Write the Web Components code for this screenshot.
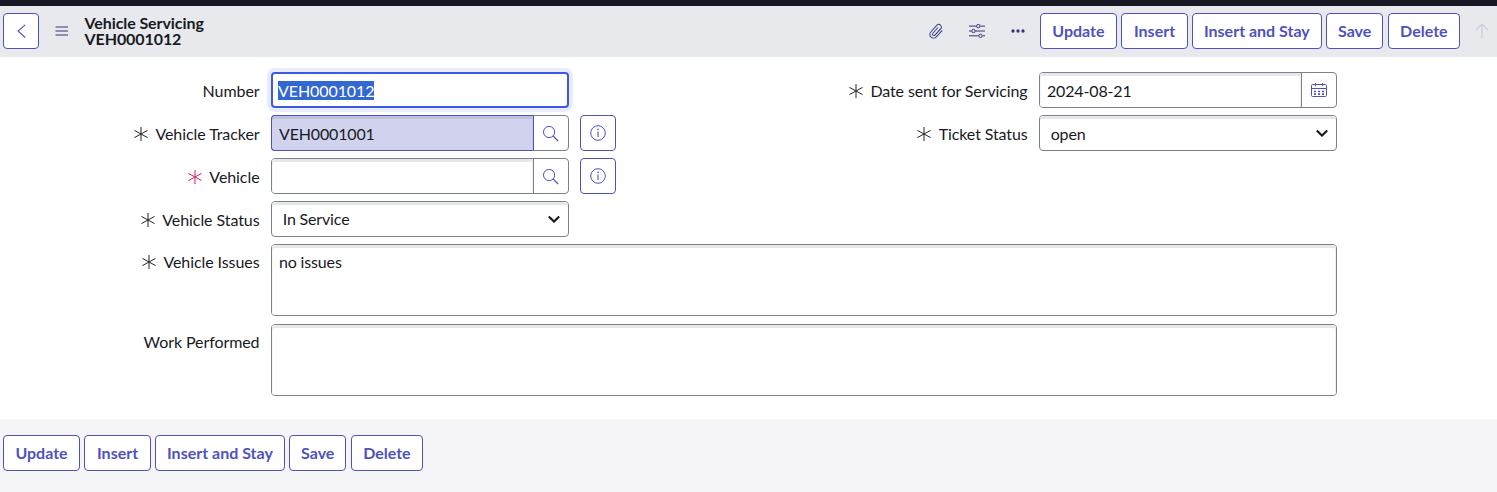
<!DOCTYPE html>
<html lang="en">
<head>
<meta charset="utf-8">
<title>Vehicle Servicing</title>
<style>
  html, body { margin: 0; height: 100%; }
  body { font-family: Lato, sans-serif; font-size: 16px; line-height: 19px; letter-spacing: -.08px; color: #181a1f; background: #fff; overflow: hidden; }
</style>
</head>
<body>
<record-page></record-page>
<script>
const ICONS = {
  back: [12, 16, '<path d="M10.2 1.8 3 8l7.2 6.5" stroke-width="1.1"/>'],
  menu: [14, 10, '<path d="M.5 1h12.5M.5 5h12.5M.5 9h12.5" stroke-width="1.1"/>'],
  clip: [16, 18, '<path transform="translate(8.4 8.8) rotate(42)" d="M4-4.2V4.6a3.7 3.7 0 0 1-7.4 0V-5.2a2.8 2.8 0 0 1 5.2 0V4.2a1.4 1.4 0 0 1-2.8 0V-3.6" stroke-width=".95"/>'],
  sliders: [16, 14, '<path d="M0 2.1h7.3M11.3 2.1H16M0 7h2.6M6.4 7H16M0 11.8h9.4M13.6 11.8H16"/><circle cx="9.3" cy="2.1" r="1.7"/><circle cx="4.5" cy="7" r="1.7"/><circle cx="11.5" cy="11.8" r="1.7"/>'],
  dots: [14, 4, '<g fill="currentColor" stroke="none"><circle cx="2" cy="2" r="1.65"/><circle cx="7" cy="2" r="1.65"/><circle cx="12" cy="2" r="1.65"/></g>'],
  up: [14, 16, '<path d="M7 15.5V1M.8 7.2 7 1l6.2 6.2" stroke-width="1.1"/>'],
  search: [17, 17, '<circle cx="6.1" cy="7" r="5.6"/><path d="m10.1 11 5 5" stroke-width="1.2"/>'],
  info: [16, 16, '<circle cx="8" cy="8" r="7.3"/><path d="M8 6.6v5.4" stroke-width="1.1"/><circle cx="8" cy="4.4" r=".8" fill="currentColor" stroke="none"/>'],
  calendar: [16, 14, '<rect x=".5" y="1.5" width="15" height="12" rx="1.2"/><path d="M.5 5.5h15M4.5 0v3M11.5 0v3"/><path d="M3 8.5h2m2 0h2m2 0h2M3 11.2h2m2 0h2m2 0h2" stroke-width="1.7"/>'],
  chevron: [12, 8, '<path d="M.8 1.6 6 6.6l5.2-5" stroke-width="2.1"/>'],
  star: [14, 14, '<path d="M7 0v14M.4 3.4l13.2 7.2M13.6 3.4.4 10.6" stroke-width="1"/>']
};
const define = (name, html, setup) => {
  const t = document.createElement('template');
  t.innerHTML = html;
  customElements.define(name, class extends HTMLElement {
    constructor() {
      super();
      this.attachShadow({ mode: 'open' }).append(t.content.cloneNode(true));
    }
    connectedCallback() { if (setup) setup(this, this.shadowRoot); }
  });
};

define('ui-icon', `<style>:host{display:block;flex:none}svg{display:block;fill:none;stroke:currentColor;stroke-width:1}</style><svg></svg>`, (el, root) => {
  const [w, h, body] = ICONS[el.getAttribute('name')];
  const svg = root.querySelector('svg');
  svg.setAttribute('width', w);
  svg.setAttribute('height', h);
  svg.setAttribute('viewBox', `0 0 ${w} ${h}`);
  svg.innerHTML = body;
});

define('ui-button', `<style>
  :host{display:block;flex:none}
  button{box-sizing:border-box;height:36px;width:var(--w,auto);padding:0 0 var(--lift,0);border:1px solid #4f52bd;border-radius:4px;background:#fff;color:#4f52bd;font:700 16px/19px Lato,sans-serif;display:flex;align-items:center;justify-content:center;white-space:nowrap}
</style><button><slot></slot></button>`);

define('action-buttons', `<style>
  :host{display:flex;gap:4.4px;--lift:2px}
</style>
<ui-button style="--w:77px">Update</ui-button><ui-button style="--w:66.4px">Insert</ui-button><ui-button style="--w:129.5px">Insert and Stay</ui-button><ui-button style="--w:57.3px">Save</ui-button><ui-button style="--w:72.3px">Delete</ui-button>`);

define('record-header', `<style>
  :host{box-sizing:border-box;display:flex;height:57px;padding:7px 8px 0 3px;border-top:6px solid #181825;background:#e7e9ed;align-items:flex-start;color:#33357f}
  .row{display:flex;align-items:center;height:36px}
  .title{margin:2px 0 0 15.5px;font-weight:700;line-height:16px;color:#181a1f}
  .tools{margin-left:auto}
  action-buttons{margin-left:15px}
</style>
<div class="row"><ui-button style="--w:36px"><ui-icon name="back"></ui-icon></ui-button><ui-icon name="menu" style="margin-left:16px"></ui-icon></div>
<div class="title"><div>Vehicle Servicing</div><div>VEH0001012</div></div>
<div class="row tools"><ui-icon name="clip"></ui-icon><ui-icon name="sliders" style="margin-left:25px"></ui-icon><ui-icon name="dots" style="margin-left:26px"></ui-icon><action-buttons></action-buttons><ui-icon name="up" style="margin-left:15px;color:#c9cbe0"></ui-icon></div>`);

define('form-row', `<style>
  :host{display:flex}
  .label{display:flex;justify-content:flex-end;gap:7.5px;width:var(--label,259.5px);height:19px;margin:9px 11.5px 0 0;white-space:nowrap;flex:none}
  :host([tall]) .label{margin-top:8px}
  ui-icon{margin-top:3px;color:#22252b}
  :host([required=empty]) ui-icon{color:#dc1f55}
  .control{display:flex}
</style><div class="label"><ui-icon name="star"></ui-icon><span></span></div><div class="control"><slot></slot></div>`, (el, root) => {
  root.querySelector('span').textContent = el.getAttribute('label');
  if (!el.hasAttribute('required')) root.querySelector('ui-icon').remove();
});

define('field-box', `<style>
  :host{box-sizing:border-box;display:flex;width:298px;height:36px;border:1px solid #7c8190;border-radius:4px;background:#fff;letter-spacing:-.16px}
  .value{flex:1;padding:var(--top,8px) 7px 0;box-shadow:inset 0 3px 0 #e7e8e9,inset -1px 0 0 #f0f0f1,inset 1px 0 0 #f7f7f8;border-radius:3px}
  .addon{display:none;box-sizing:border-box;width:35px;align-items:center;justify-content:center;border-left:1px solid #7c8190;color:#4f52bd}
  :host([addon]) .addon{display:flex}
  :host([addon]) .value{border-radius:3px 0 0 3px}
  :host([kind=area]){width:1066px;height:72px}
  :host([kind=area]) .value{padding-top:7px}
  :host([kind=select]) .value{padding-left:10.7px;border-radius:3px 0 0 3px;box-shadow:inset 0 3px 0 #e7e8e9}
  :host([kind=select]) .addon{display:flex;width:28px;border:0;color:#181a1f;box-shadow:inset 0 3px 0 #e7e8e9;border-radius:0 3px 3px 0}
  :host([filled]) .value{margin:-1px 0 -1px -1px;border:1px solid #4f52bd;border-right:0;border-radius:4px 0 0 4px;background:#d1d2ee;box-shadow:inset 0 3px 0 #bfc0dc,inset -1px 0 0 #c8c9e5}
  :host([filled]) .addon{border-left-color:#4f52bd}
  :host([focused]){border:2px solid #3d58e3;box-shadow:0 0 0 4px #e9ecfc;letter-spacing:-.08px}
  :host([focused]) .value{box-shadow:none;padding:7px 5px 0}
  :host([focused]) ::slotted(span){display:inline-block;background:#3367d1;color:#fff}
</style><div class="value"><slot></slot></div><div class="addon"></div>`, (el, root) => {
  const name = el.getAttribute('addon') || (el.getAttribute('kind') === 'select' && 'chevron');
  if (name) {
    const icon = document.createElement('ui-icon');
    icon.setAttribute('name', name);
    root.querySelector('.addon').append(icon);
  }
});

define('record-form', `<style>
  :host{box-sizing:border-box;display:flex;flex-direction:column;height:362px;padding-top:15px;gap:7px}
  .columns{display:flex}
  .column{display:flex;flex-direction:column;gap:7px;width:616px}
  .column.right{width:721px;--label:412px;letter-spacing:-.12px}
  .column.right form-row{margin-left:-.5px}
  .info{margin-left:11px}
</style>
<div class="columns">
  <div class="column">
    <form-row label="Number"><field-box focused><span>VEH0001012</span></field-box></form-row>
    <form-row label="Vehicle Tracker" required><field-box filled addon="search">VEH0001001</field-box><ui-button class="info" style="--w:36px"><ui-icon name="info"></ui-icon></ui-button></form-row>
    <form-row label="Vehicle" required="empty"><field-box addon="search"></field-box><ui-button class="info" style="--w:36px"><ui-icon name="info"></ui-icon></ui-button></form-row>
    <form-row label="Vehicle Status" required><field-box kind="select" style="--top:7px">In Service</field-box></form-row>
  </div>
  <div class="column right">
    <form-row label="Date sent for Servicing" required><field-box addon="calendar">2024-08-21</field-box></form-row>
    <form-row label="Ticket Status" required><field-box kind="select">open</field-box></form-row>
  </div>
</div>
<form-row tall label="Vehicle Issues" required><field-box kind="area">no issues</field-box></form-row>
<form-row tall label="Work Performed" style="margin-top:1px"><field-box kind="area"></field-box></form-row>`);

define('record-footer', `<style>:host{box-sizing:border-box;display:flex;height:73px;padding:16px 3px 0;background:#f5f5f8}</style><action-buttons></action-buttons>`);

define('record-page', `<style>:host{display:flex;flex-direction:column}</style><record-header></record-header><record-form></record-form><record-footer></record-footer>`);
</script>
</body>
</html>
